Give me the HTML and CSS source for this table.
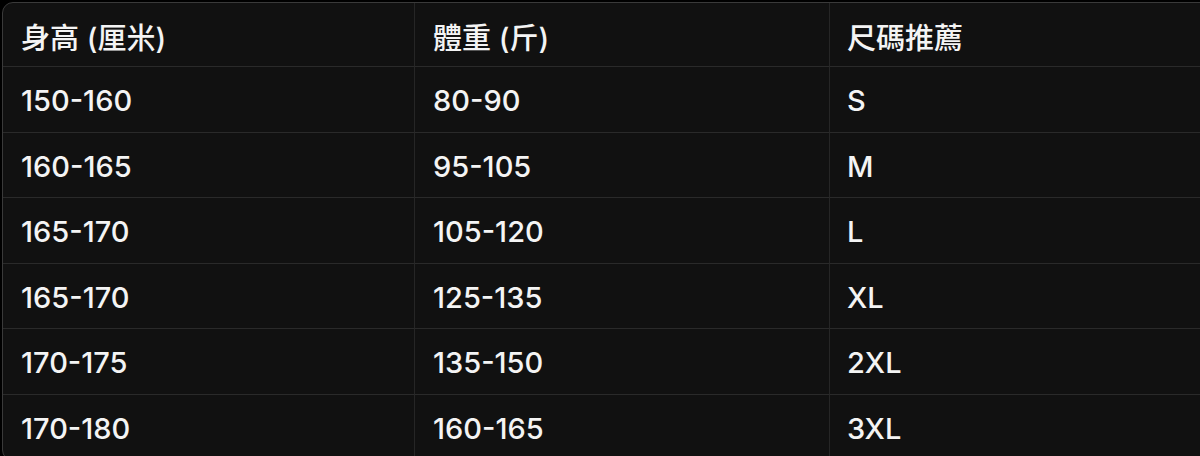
FILE: index.html
```html
<!DOCTYPE html>
<html lang="zh-Hant">
<head>
<meta charset="utf-8">
<link rel="stylesheet" href="styles.css">
</head>
<body>
<div class="wrap">
  <div class="grid">
    <div class="cell head">身高 (厘米)</div>
    <div class="cell head">體重 (斤)</div>
    <div class="cell head last">尺碼推薦</div>

    <div class="cell">150-160</div>
    <div class="cell">80-90</div>
    <div class="cell last">S</div>

    <div class="cell">160-165</div>
    <div class="cell">95-105</div>
    <div class="cell last">M</div>

    <div class="cell">165-170</div>
    <div class="cell">105-120</div>
    <div class="cell last">L</div>

    <div class="cell">165-170</div>
    <div class="cell">125-135</div>
    <div class="cell last">XL</div>

    <div class="cell">170-175</div>
    <div class="cell">135-150</div>
    <div class="cell last">2XL</div>

    <div class="cell">170-180</div>
    <div class="cell">160-165</div>
    <div class="cell last">3XL</div>
  </div>
</div>
</body>
</html>
```
FILE: styles.css
```css
html, body {
  margin: 0;
  padding: 0;
  background: #000;
  overflow: hidden;
}
body {
  font-family: Inter, "Noto Sans CJK TC", sans-serif;
  color: #f4f4f4;
}
.wrap {
  margin: 2px 0 0 2px;
  width: 1250px;
  border: 1px solid #3a3a3a;
  border-radius: 11px;
  background: #111111;
  overflow: hidden;
}
.grid {
  display: grid;
  grid-template-columns: 412px 415px 423px;
}
.cell {
  box-sizing: border-box;
  height: 65.5px;
  padding-left: 18px;
  padding-top: 3px;
  display: flex;
  align-items: center;
  font-size: 29px;
  font-weight: 500;
  border-bottom: 1px solid #2a2a2a;
  border-right: 1px solid #262626;
  white-space: nowrap;
}
.cell.head {
  height: 64px;
}
.cell.last {
  border-right: none;
  padding-left: 17px;
}
```
